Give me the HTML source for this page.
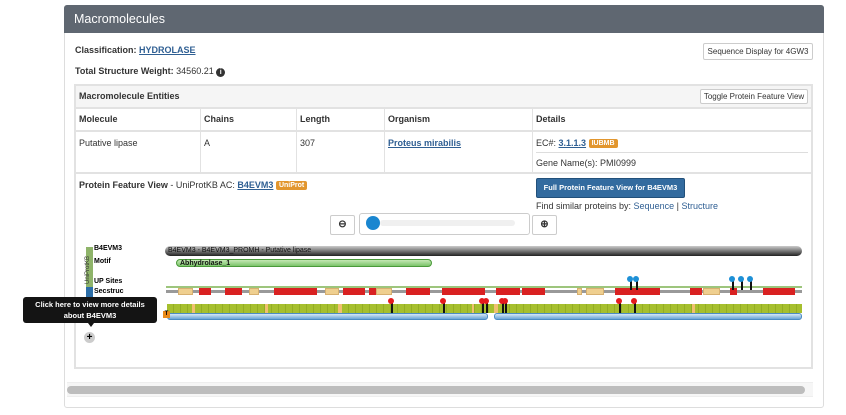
<!DOCTYPE html>
<html><head><meta charset="utf-8"><style>
*{box-sizing:border-box;margin:0;padding:0}
body{width:846px;height:415px;background:#fff;font-family:"Liberation Sans",sans-serif;font-size:9px;color:#333;position:relative;overflow:hidden}
.a{position:absolute}
a{color:#2f5f93}
b{font-weight:bold}
.btn{position:absolute;border:1px solid #ccc;border-radius:2px;background:#fff;font-size:8px;color:#333;text-align:center}
.badge{display:inline-block;background:#e2962e;color:#fff;font-size:7px;font-weight:bold;padding:1px 3px;border-radius:2px;vertical-align:1px}
.hl{position:absolute;background:#e2e2e2;height:2px}
.vl{position:absolute;background:#e2e2e2;width:1px}
.r{position:absolute;background:#d92121;height:7px;top:288px}
.t{position:absolute;background:#efcf8f;height:7px;top:288px;border:1px solid #d7b070}
.pr{position:absolute;width:1.5px;background:#111}
.dot{position:absolute;width:6px;height:6px;border-radius:50%}
.lb{position:absolute;font-size:7px;color:#000;font-weight:bold;left:94px}
</style></head><body>
<div class="a" style="left:64px;top:5px;width:760px;height:403px;border:1px solid #ddd;border-radius:3px"></div>
<div class="a" style="left:64px;top:5px;width:760px;height:28px;background:#5f6771;border-radius:3px 3px 0 0"></div>
<div class="a" style="left:74px;top:12px;color:#fff;font-size:12.5px">Macromolecules</div>
<div class="a" style="left:75px;top:45px"><b>Classification:</b> <a href="#"><b>HYDROLASE</b></a></div>
<div class="a" style="left:75px;top:66px"><b>Total Structure Weight:</b> 34560.21 <span style="display:inline-block;width:9px;height:9px;border-radius:50%;background:#333;color:#fff;font-size:7px;text-align:center;line-height:9px;font-weight:bold">i</span></div>
<div class="btn" style="left:703px;top:43px;width:110px;height:17px;line-height:15px">Sequence Display for 4GW3</div>

<div class="a" style="left:74px;top:84px;width:739px;height:285px;border:2px solid #e2e2e2"></div>
<div class="a" style="left:76px;top:86px;width:735px;height:22px;background:#f5f5f5"></div>
<div class="a" style="left:79px;top:91px"><b>Macromolecule Entities</b></div>
<div class="btn" style="left:700px;top:89px;width:108px;height:15px;line-height:13px">Toggle Protein Feature View</div>
<div class="hl" style="left:76px;top:107px;width:735px"></div>
<div class="hl" style="left:76px;top:130px;width:735px"></div>
<div class="hl" style="left:76px;top:172px;width:735px"></div>
<div class="vl" style="left:200px;top:108px;height:64px"></div>
<div class="vl" style="left:296px;top:108px;height:64px"></div>
<div class="vl" style="left:384px;top:108px;height:64px"></div>
<div class="vl" style="left:532px;top:108px;height:64px"></div>
<div class="a" style="left:536px;top:152px;width:272px;height:1px;background:#ddd"></div>
<div class="a" style="left:79px;top:114px"><b>Molecule</b></div>
<div class="a" style="left:204px;top:114px"><b>Chains</b></div>
<div class="a" style="left:300px;top:114px"><b>Length</b></div>
<div class="a" style="left:388px;top:114px"><b>Organism</b></div>
<div class="a" style="left:536px;top:114px"><b>Details</b></div>
<div class="a" style="left:79px;top:138px">Putative lipase</div>
<div class="a" style="left:204px;top:138px">A</div>
<div class="a" style="left:300px;top:138px">307</div>
<div class="a" style="left:388px;top:138px"><a href="#"><b>Proteus mirabilis</b></a></div>
<div class="a" style="left:536px;top:138px">EC#: <a href="#"><b>3.1.1.3</b></a> <span class="badge">IUBMB</span></div>
<div class="a" style="left:536px;top:158px">Gene Name(s): PMI0999</div>

<div class="a" style="left:79px;top:180px"><b>Protein Feature View</b> - UniProtKB AC: <a href="#"><b>B4EVM3</b></a> <span class="badge">UniProt</span></div>
<div class="a" style="left:536px;top:178px;width:149px;height:20px;background:#336b9f;border:1px solid #22507a;border-radius:2px;color:#fff;font-size:7.5px;font-weight:bold;text-align:center;line-height:18px">Full Protein Feature View for B4EVM3</div>
<div class="a" style="left:536px;top:201px">Find similar proteins by: <a href="#" style="text-decoration:none">Sequence</a> | <a href="#" style="text-decoration:none">Structure</a></div>
<div class="btn" style="left:330px;top:215px;width:25px;height:20px;line-height:18px;font-size:10px;font-weight:bold">&#x2296;</div>
<div class="a" style="left:359px;top:213px;width:171px;height:22px;border:1px solid #ccc;border-radius:3px"></div>
<div class="a" style="left:380px;top:220px;width:135px;height:6px;background:#f0f0f0;border-radius:3px"></div>
<div class="a" style="left:366px;top:216px;width:14px;height:14px;border-radius:50%;background:#1a86d0"></div>
<div class="btn" style="left:532px;top:215px;width:25px;height:20px;line-height:18px;font-size:10px;font-weight:bold">&#x2295;</div>

<div class="a" style="left:86px;top:247px;width:7px;height:40px;background:#8fb46a"></div>
<div class="a" style="left:86px;top:287px;width:7px;height:10px;background:#2c6ea8"></div>
<div class="a" style="left:85px;top:284px;transform:rotate(-90deg);transform-origin:0 0;font-size:6px;color:#333;width:38px">UniProtKB</div>
<div class="lb" style="top:245px">B4EVM3</div>
<div class="lb" style="top:258px">Motif</div>
<div class="lb" style="top:278px">UP Sites</div>
<div class="lb" style="top:288px">Secstruc</div>

<div class="a" style="left:165px;top:246px;width:637px;height:10px;border-radius:5px;background:linear-gradient(#ccc,#777 50%,#222);font-size:7px;color:#111;padding-left:3px;line-height:10px">B4EVM3 - B4EVM3_PROMH - Putative lipase</div>
<div class="a" style="left:176px;top:259px;width:256px;height:8px;border-radius:4px;background:linear-gradient(#c5e8b5,#7cc46a);border:1px solid #4a9a3a;font-size:7px;color:#111;padding-left:3px;line-height:7px;font-weight:bold">Abhydrolase_1</div>

<div class="a" style="left:166px;top:286px;width:636px;height:2px;background:#9dc57c"></div>
<div class="a" style="left:166px;top:290px;width:636px;height:3px;background:#999"></div>
<div class="t" style="left:178px;width:15px"></div>
<div class="r" style="left:199px;width:12px"></div>
<div class="r" style="left:225px;width:17px"></div>
<div class="t" style="left:249px;width:10px"></div>
<div class="r" style="left:274px;width:43px"></div>
<div class="t" style="left:325px;width:14px"></div>
<div class="r" style="left:343px;width:22px"></div>
<div class="r" style="left:369px;width:7px"></div>
<div class="t" style="left:376px;width:16px"></div>
<div class="r" style="left:406px;width:24px"></div>
<div class="r" style="left:442px;width:43px"></div>
<div class="r" style="left:496px;width:24px"></div>
<div class="r" style="left:522px;width:23px"></div>
<div class="t" style="left:577px;width:5px"></div>
<div class="t" style="left:586px;width:18px"></div>
<div class="r" style="left:615px;width:12px"></div>
<div class="r" style="left:623px;width:37px"></div>
<div class="r" style="left:690px;width:12px"></div>
<div class="t" style="left:703px;width:17px"></div>
<div class="r" style="left:730px;width:7px"></div>
<div class="r" style="left:763px;width:32px"></div>

<div class="a" style="left:167px;top:304px;width:635px;height:9px;background:repeating-linear-gradient(90deg,#a6bf2e 0 6px,#93ad24 6px 7px)"></div>
<div class="a" style="left:192px;top:304px;width:3px;height:9px;background:#f0c070"></div>
<div class="a" style="left:265px;top:304px;width:3px;height:9px;background:#f0c070"></div>
<div class="a" style="left:338px;top:304px;width:4px;height:9px;background:#f0c070"></div>
<div class="a" style="left:472px;top:304px;width:2px;height:9px;background:#f0c070"></div>
<div class="a" style="left:494px;top:304px;width:4px;height:9px;background:#f0c070"></div>
<div class="a" style="left:692px;top:304px;width:3px;height:9px;background:#f0c070"></div>
<div class="a" style="left:167px;top:313px;width:321px;height:7px;border-radius:3px;background:linear-gradient(#d6e8f7,#6aa5d6);border:1px solid #4c8cc4"></div>
<div class="a" style="left:494px;top:313px;width:308px;height:7px;border-radius:3px;background:linear-gradient(#d6e8f7,#6aa5d6);border:1px solid #4c8cc4"></div>
<div class="a" style="left:163px;top:311px;width:7px;height:7px;background:#e88a1a;font-size:6px;line-height:7px;text-align:center;color:#000;font-weight:bold">T</div>

<div class="pr" style="left:391px;top:302px;height:11px"></div><div class="dot" style="left:388px;top:298px;background:#e41a1c"></div>
<div class="pr" style="left:443px;top:302px;height:11px"></div><div class="dot" style="left:440px;top:298px;background:#e41a1c"></div>
<div class="pr" style="left:482px;top:302px;height:11px"></div><div class="dot" style="left:479px;top:298px;background:#e41a1c"></div>
<div class="pr" style="left:486px;top:302px;height:11px"></div><div class="dot" style="left:483px;top:298px;background:#e41a1c"></div>
<div class="pr" style="left:502px;top:302px;height:11px"></div><div class="dot" style="left:499px;top:298px;background:#e41a1c"></div>
<div class="pr" style="left:505px;top:302px;height:11px"></div><div class="dot" style="left:502px;top:298px;background:#e41a1c"></div>
<div class="pr" style="left:619px;top:302px;height:11px"></div><div class="dot" style="left:616px;top:298px;background:#e41a1c"></div>
<div class="pr" style="left:634px;top:302px;height:11px"></div><div class="dot" style="left:631px;top:298px;background:#e41a1c"></div>

<div class="pr" style="left:630px;top:280px;height:10px"></div><div class="dot" style="left:627px;top:276px;background:#1e90d6"></div>
<div class="pr" style="left:636px;top:280px;height:10px"></div><div class="dot" style="left:633px;top:276px;background:#1e90d6"></div>
<div class="pr" style="left:732px;top:280px;height:10px"></div><div class="dot" style="left:729px;top:276px;background:#1e90d6"></div>
<div class="pr" style="left:741px;top:280px;height:10px"></div><div class="dot" style="left:738px;top:276px;background:#1e90d6"></div>
<div class="pr" style="left:750px;top:280px;height:10px"></div><div class="dot" style="left:747px;top:276px;background:#1e90d6"></div>

<div class="a" style="left:23px;top:297px;width:134px;height:26px;background:#141414;border-radius:3px;color:#fff;font-size:7.5px;font-weight:bold;text-align:center;line-height:11px;padding-top:2px">Click here to view more details<br>about B4EVM3</div>
<div class="a" style="left:88px;top:323px;width:0;height:0;border-left:3px solid transparent;border-right:3px solid transparent;border-top:4px solid #141414"></div>
<div class="a" style="left:84px;top:332px;width:11px;height:11px;border-radius:50%;background:#ccc;font-size:10px;line-height:11px;text-align:center;color:#000;font-weight:bold">+</div>

<div class="a" style="left:67px;top:382px;width:746px;height:15px;background:#f6f6f6;border-top:1px solid #eee;border-bottom:1px solid #eee"></div>
<div class="a" style="left:67px;top:386px;width:738px;height:8px;background:#bdbdbd;border-radius:4px"></div>
</body></html>
